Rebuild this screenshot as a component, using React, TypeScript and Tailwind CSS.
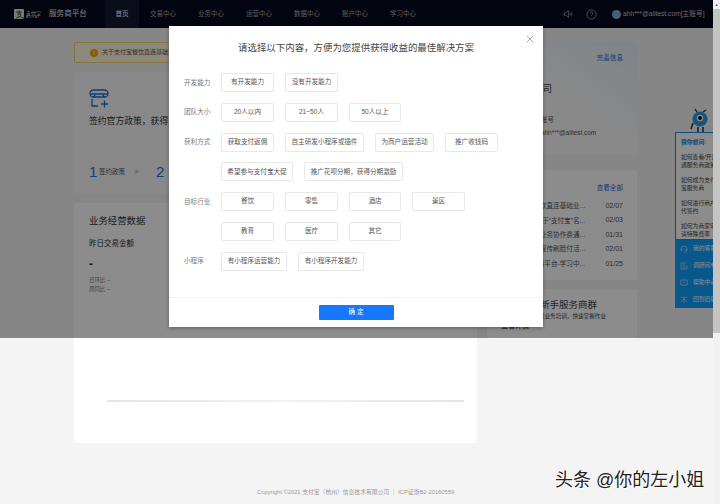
import React from "react";

const FONT = "[font-family:'Liberation_Sans','Noto_Sans_CJK_SC',sans-serif]";

function Opt({ w, children }: { w: string; children: React.ReactNode }) {
  return (
    <button className={`${w} h-[19px] shrink-0 rounded-[2px] border border-[#e8e8e8] bg-white text-[6.6px] leading-none text-[#555] flex items-center justify-center`}>
      {children}
    </button>
  );
}

function Row({ label, children }: { label?: string; children: React.ReactNode }) {
  return (
    <div className="flex items-center h-[19px]">
      <div className="w-[37px] text-[6.6px] text-[#777]">{label}</div>
      <div className="flex gap-[11px]">{children}</div>
    </div>
  );
}

const news = [
  ["关于支付宝餐饮直连基础业...", "02/07"],
  ["关于“支付宝”名...", "02/03"],
  ["服务商业务协作费通...", "01/31"],
  ["服务商宣传刷脸付活...", "02/01"],
  ["服务商平台-学习中...", "01/25"],
];

const nav = ["交易中心", "业务中心", "运营中心", "数据中心", "账户中心", "学习中心"];

const tools: [string, React.ReactNode][] = [
  ["我的客服", <path key="a" d="M1.5 6a4.5 4.5 0 0 1 9 0M1.5 6v2.5h1.5V6H1.5zM9 6v2.5h1.5V6H9zM9.5 8.5c0 1.5-1.5 2-3 2" />],
  ["调研问卷", <path key="b" d="M9.5 1.5h-8v9h9V5M3.5 4.5h4M3.5 7.5h5" />],
  ["帮助中心", <path key="c" d="M1 1.5h10v7.5H7l-1 1.5-1-1.5H1v-7.5zM6 3.5v3M6 7.3v.4" />],
  ["回到旧版", <path key="d" d="M1 2h10M6 2v9M6 4 1.5 9M6 4l4.5 5" />],
];

export default function App() {
  return (
    <div className={`${FONT} relative w-[720px] h-[504px] overflow-hidden flex bg-[#f4f4f4]`}>
      <div className="w-[713px] h-full flex flex-col">
        <header className="h-[28px] shrink-0 bg-[#040a1c] flex items-center text-white">
          <div className="w-[14px]" />
          <svg className="w-[10px] h-[10px]" viewBox="0 0 10 10">
            <rect width="10" height="10" rx="1" fill="#ddd" />
            <path d="M2 3h6M5 1.5V5M3 5h4c-.5 2-2 3.5-5 4M4 6.5c1 .8 3 1.8 6 2.5" stroke="#333" strokeWidth="0.8" fill="none" />
          </svg>
          <div className="ml-[2px] w-[15px] flex flex-col text-[#ddd] whitespace-nowrap">
            <span className="text-[5px] leading-[6px]">支付宝</span>
            <span className="text-[3px] leading-[3px] tracking-[0.6px]">ALIPAY</span>
          </div>
          <div className="ml-[8px] w-[56px] text-[7.6px] text-[#e8e8e8] whitespace-nowrap">服务商平台</div>
          <div className="w-[34px] h-full bg-[#141a30] flex items-center justify-center text-[6.5px] text-white">首页</div>
          {nav.map((n) => (
            <div key={n} className="w-[48px] text-center text-[6.5px] text-[#a8a8a8]">{n}</div>
          ))}
          <div className="w-[136px]" />
          <svg className="w-[10px] h-[10px] text-[#bbb]" viewBox="0 0 24 24" fill="none" stroke="currentColor" strokeWidth="1.6">
            <path d="M3 9v6h4l6 5V4L7 9H3z" />
            <path d="M16 9a4 4 0 0 1 0 6M19 6a8 8 0 0 1 0 12" />
          </svg>
          <svg className="ml-[13px] w-[11px] h-[11px] text-[#bbb]" viewBox="0 0 24 24" fill="none" stroke="currentColor" strokeWidth="1.6">
            <circle cx="12" cy="12" r="10" />
            <path d="M9 9.5a3 3 0 1 1 4.5 2.6c-1 .6-1.5 1.2-1.5 2.4M12 17.5v.5" />
          </svg>
          <div className="ml-[15px] w-[9px] h-[9px] rounded-full bg-[#7fb0d8]" />
          <div className="ml-[2px] text-[6.7px] text-[#c0c0c0] whitespace-nowrap">ahh***@alitest.com[主账号]</div>
        </header>

        <div className="flex-1 flex flex-col">
          <div className="flex pl-[74px] pt-[14px] gap-[10px] h-[415px]">
            <div className="w-[403px] flex flex-col">
              <div className="h-[21px] w-[300px] rounded-[2px] border border-[#f4cf6a] bg-[#fff8e0] flex items-center pl-[15px]">
                <div className="w-[8px] h-[8px] rounded-full bg-[#f5a800] text-white text-[6px] leading-[8px] text-center font-bold">!</div>
                <div className="ml-[4px] text-[6px] text-[#555] whitespace-nowrap">关于支付宝餐饮直连基础业务</div>
              </div>
              <div className="mt-[9px] h-[122px] rounded-[3px] bg-gradient-to-r from-[#f8f8f9] to-[#fcfcfc] pl-[15px] pt-[17px] text-[#333]">
                <svg className="w-[20px] h-[19px] text-[#1d6fe0]" viewBox="0 0 20 19" fill="none" stroke="currentColor" strokeWidth="1.3">
                  <rect x="1" y="1" width="18" height="7" rx="3.5" />
                  <path d="M1.5 5h17M6 5c0 2-1 3-2 3M14 5c0 2 1 3 2 3" />
                  <path d="M3 10v7h6M12 15h7M15.5 11.5v7" />
                </svg>
                <div className="mt-[7px] text-[8.8px] leading-[13px] whitespace-nowrap">签约官方政策，获得</div>
                <div className="mt-[36px] flex items-center whitespace-nowrap">
                  <span className="text-[15px] leading-none text-[#1d6fe0] w-[10px]">1</span>
                  <span className="text-[6.5px] text-[#555] w-[35px]">签约政策</span>
                  <span className="text-[8px] text-[#888] w-[22px]">&gt;</span>
                  <span className="text-[15px] leading-none text-[#1d6fe0] w-[10px]">2</span>
                </div>
              </div>
              <div className="relative mt-[9px] h-[240px] rounded-[3px] bg-white pl-[15px] pt-[11px] text-[#333]">
                <div className="text-[9.4px] leading-[13px]">业务经营数据</div>
                <div className="mt-[12px] text-[7.5px] leading-[10px]">昨日交易金额</div>
                <div className="mt-[9px] text-[12px] leading-[12px] font-bold">-</div>
                <div className="mt-[6px] text-[5.4px] leading-[9px] text-[#777]">日环比 --</div>
                <div className="text-[5.4px] leading-[9px] text-[#777]">周同比 --</div>
                <div className="mt-[106px] ml-[18px] w-[357px] h-[2px] bg-gradient-to-r from-[#e4e4e4] via-[#f2f2f2] to-[#e4e4e4]" />
              </div>
            </div>

            <div className="w-[150px] flex flex-col">
              <div className="h-[113px] rounded-[3px] bg-gradient-to-tr from-[#fafafa] via-[#fafafa] to-[#e6f0fb] pl-[8px] pr-[14px] pt-[10px] relative">
                <div className="text-right text-[6.6px] leading-[12px] text-[#1d6fe0]">完善信息</div>
                <div className="mt-[18px] text-[9.5px] leading-[13px] text-[#444] whitespace-nowrap">科技有限公司</div>
                <div className="mt-[20px] ml-[46px] text-[6.4px] leading-[10px] text-[#555]">账号</div>
                <div className="mt-[3px] ml-[46px] text-[6.4px] leading-[10px] text-[#555] whitespace-nowrap">ahh***@alitest.com</div>
              </div>
              <div className="mt-[15px] h-[110px] rounded-[3px] bg-white pr-[14px] pt-[12px] text-[6.6px] text-[#555]">
                <div className="text-right leading-[12px] text-[#1d6fe0]">查看全部</div>
                <div className="mt-[5px] flex flex-col">
                  {news.map(([t, d]) => (
                    <div key={d} className="h-[14.4px] flex items-center justify-end whitespace-nowrap">
                      <span>{t}</span>
                      <span className="ml-[19px] w-[19px] text-[7px] text-right">{d}</span>
                    </div>
                  ))}
                </div>
              </div>
              <div className="mt-[9px] h-[50px] rounded-[3px] bg-white pt-[10px] text-[#444] overflow-hidden">
                <div className="pr-[40px] text-right text-[9.5px] leading-[12px] whitespace-nowrap">加入新手服务商群</div>
                <div className="pr-[31px] mt-[1px] text-right text-[5.6px] leading-[9px] whitespace-nowrap">获取业务培训，快速掌握作业</div>
                <div className="pl-[14px] text-[7px] leading-[10px] font-bold">查看详情</div>
              </div>
            </div>
          </div>
          <div className="mt-[44px] pl-[257px] text-[5.8px] leading-[10px] text-[#999] whitespace-nowrap">
            Copyright ©2021 支付宝（杭州）信息技术有限公司 ｜ ICP证浙B2-20160559
          </div>
        </div>
      </div>

      <div className="w-[7px] h-full bg-[#f1f1f1] flex flex-col">
        <div className="h-[9px] text-[#555] text-[4px] leading-[9px] text-center">▲</div>
        <div className="h-[324px] bg-[#c4c4c4]" />
      </div>

      {/* Floating helper */}
      <div className="absolute left-[675px] top-[108px] w-[38px] overflow-hidden">
        <svg className="ml-[15px] w-[20px] h-[24px] block" viewBox="0 0 20 24" fill="none">
          <path d="M7 4 5 1M13 4l3-2" stroke="#222" strokeWidth="1.2" />
          <circle cx="10" cy="11" r="7.5" fill="#2f9ade" />
          <circle cx="10" cy="10" r="3.2" fill="#fff" />
          <circle cx="10" cy="10" r="2" fill="#111" />
          <path d="M3 15 1 21M8 19v5M13 19v5" stroke="#222" strokeWidth="1.4" />
        </svg>
        <div className="w-[60px] h-[108px] bg-white border border-[#1a8ae0] pl-[5px] pt-[5px] text-[5.8px] leading-[8px] text-[#444]">
          <div className="text-[#1a8ae0] font-bold mb-[7px]">猜你想问:</div>
          <div className="mb-[7px]">如何查看/开通<br />通服务商政策</div>
          <div className="mb-[7px]">如何成为支付<br />宝服务商</div>
          <div className="mb-[6.5px]">如何进行商户<br />代签约</div>
          <div>如何为商家申<br />请特殊费率</div>
        </div>
        <div className="w-[60px] h-[68px] bg-[#12a0ff] pl-[5px] text-[5.8px] text-white flex flex-col">
          {tools.map(([t, icon]) => (
            <div key={t} className="h-[17px] flex items-center whitespace-nowrap">
              <svg className="w-[8px] h-[8px] mr-[5px] shrink-0 opacity-80" viewBox="0 0 12 12" fill="none" stroke="currentColor" strokeWidth="0.9">
                {icon}
              </svg>
              <span>{t}</span>
            </div>
          ))}
        </div>
      </div>

      {/* Mask */}
      <div className="absolute left-0 top-0 w-[713px] h-[338px] bg-black/45" />

      {/* Modal */}
      <div className="absolute left-[169px] top-[26px] w-[374px] h-[301px] bg-white shadow-[0_1px_4px_rgba(0,0,0,0.3)] flex flex-col">
        <div className="relative h-[47px] flex justify-center pt-[15px] text-[9.45px] leading-[14px] text-[#444] whitespace-nowrap">
          <span>请选择以下内容，方便为您提供获得收益的最佳解决方案</span>
          <svg className="absolute right-[9px] top-[9px] w-[8px] h-[8px] text-[#888]" viewBox="0 0 10 10" stroke="currentColor" strokeWidth="0.9">
            <path d="M1 1l8 8M9 1l-8 8" />
          </svg>
        </div>
        <div className="flex flex-col gap-[10.8px] pl-[15px] h-[224px]">
          <Row label="开发能力">
            <Opt w="w-[53px]">有开发能力</Opt>
            <Opt w="w-[53px]">没有开发能力</Opt>
          </Row>
          <Row label="团队大小">
            <Opt w="w-[53px]">20人以内</Opt>
            <Opt w="w-[53px]">21~50人</Opt>
            <Opt w="w-[52px]">50人以上</Opt>
          </Row>
          <Row label="获利方式">
            <Opt w="w-[53px]">获取支付返佣</Opt>
            <Opt w="w-[79px]">自主研发小程序或插件</Opt>
            <Opt w="w-[59px]">为商户运营活动</Opt>
            <Opt w="w-[53px]">推广收钱码</Opt>
          </Row>
          <Row>
            <Opt w="w-[72px]">希望参与支付宝大促</Opt>
            <Opt w="w-[99px]">推广花呗分期，获得分期激励</Opt>
          </Row>
          <Row label="目标行业">
            <Opt w="w-[53px]">餐饮</Opt>
            <Opt w="w-[53px]">零售</Opt>
            <Opt w="w-[52px]">酒店</Opt>
            <Opt w="w-[53px]">景区</Opt>
          </Row>
          <Row>
            <Opt w="w-[53px]">教育</Opt>
            <Opt w="w-[53px]">医疗</Opt>
            <Opt w="w-[52px]">其它</Opt>
          </Row>
          <Row label="小程序">
            <Opt w="w-[66px]">有小程序运营能力</Opt>
            <Opt w="w-[66px]">有小程序开发能力</Opt>
          </Row>
        </div>
        <div className="flex-1 border-t border-[#f3f3f3] flex justify-center pt-[7px]">
          <button className="w-[75px] h-[15px] bg-[#1677ff] text-white text-[6.6px] leading-none rounded-[1px]">确 定</button>
        </div>
      </div>

      <div className="absolute left-[555px] top-[469px] text-[18px] leading-[22px] text-[#222] whitespace-nowrap [text-shadow:1px_1px_0_#fff,-1px_0_0_#fff]">
        头条 @你的左小姐
      </div>
    </div>
  );
}
